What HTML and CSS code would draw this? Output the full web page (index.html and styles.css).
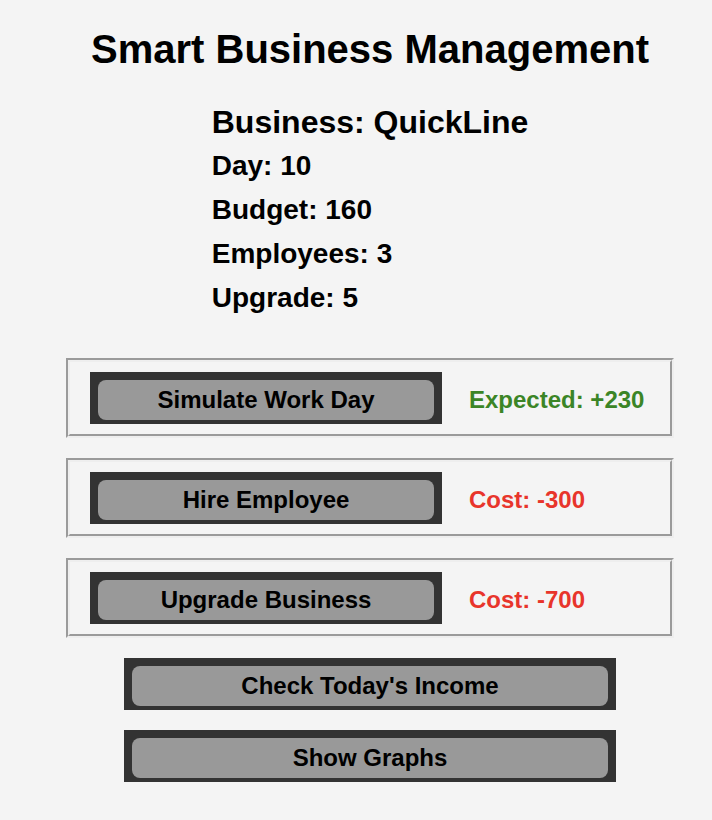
FILE: index.html
```html
<!DOCTYPE html>
<html lang="en">
<head>
    <meta charset="UTF-8">
    <meta name="viewport" content="width=device-width, initial-scale=1.0">
    <title>Smart Business Management</title>
    <link rel="stylesheet" href="styles.css">
</head>
<body>
    <div class="app">
        <h1>Smart Business Management</h1>
        <div class="stats">
            <p class="business">Business: <span id="name">QuickLine</span></p>
            <p>Day: <span id="day">10</span></p>
            <p>Budget: <span id="budget">160</span></p>
            <p>Employees: <span id="employees">3</span></p>
            <p>Upgrade: <span id="upgrade">5</span></p>
        </div>

        <div class="action-row">
            <div class="btn-frame">
                <button>Simulate Work Day</button>
            </div>
            <span class="gain">Expected: +230</span>
        </div>
        <div class="action-row">
            <div class="btn-frame">
                <button>Hire Employee</button>
            </div>
            <span class="cost">Cost: -300</span>
        </div>
        <div class="action-row">
            <div class="btn-frame">
                <button>Upgrade Business</button>
            </div>
            <span class="cost">Cost: -700</span>
        </div>

        <div class="btn-frame wide">
            <button>Check Today's Income</button>
        </div>
        <div class="btn-frame wide">
            <button>Show Graphs</button>
        </div>
    </div>
</body>
</html>
```

FILE: styles.css
```css
body {
    font-family: "Liberation Sans", Arial, sans-serif;
    font-weight: bold;
    margin: 0;
    padding-left: 28px;
    background-color: #f4f4f4;
    color: #000;
}
.app {
    width: 608px;
    margin: 0 auto;
    text-align: center;
}
h1 {
    font-size: 40px;
    line-height: 46px;
    margin: 26px 0 28px;
}
.stats {
    display: inline-block;
    text-align: left;
    margin-bottom: 38px;
}
.stats p {
    margin: 0;
    font-size: 28px;
    line-height: 44px;
}
.stats .business {
    font-size: 32px;
}
.action-row {
    display: flex;
    align-items: center;
    gap: 27px;
    padding: 10px 20px;
    border: 4px groove #eee;
    margin-bottom: 20px;
}
.btn-frame {
    width: 352px;
    padding: 8px 8px 4px;
    box-sizing: border-box;
    background-color: #333;
}
.btn-frame.wide {
    width: 492px;
    margin: 0 auto 20px;
}
.btn-frame button {
    display: block;
    width: 100%;
    height: 40px;
    padding: 0;
    border: none;
    border-radius: 8px;
    background-color: #999;
    color: #000;
    font-family: inherit;
    font-weight: bold;
    font-size: 24px;
    cursor: pointer;
}
.gain, .cost {
    font-size: 24px;
    padding-top: 4px;
}
.gain {
    color: #3b8526;
}
.cost {
    color: #e8352b;
}
```
